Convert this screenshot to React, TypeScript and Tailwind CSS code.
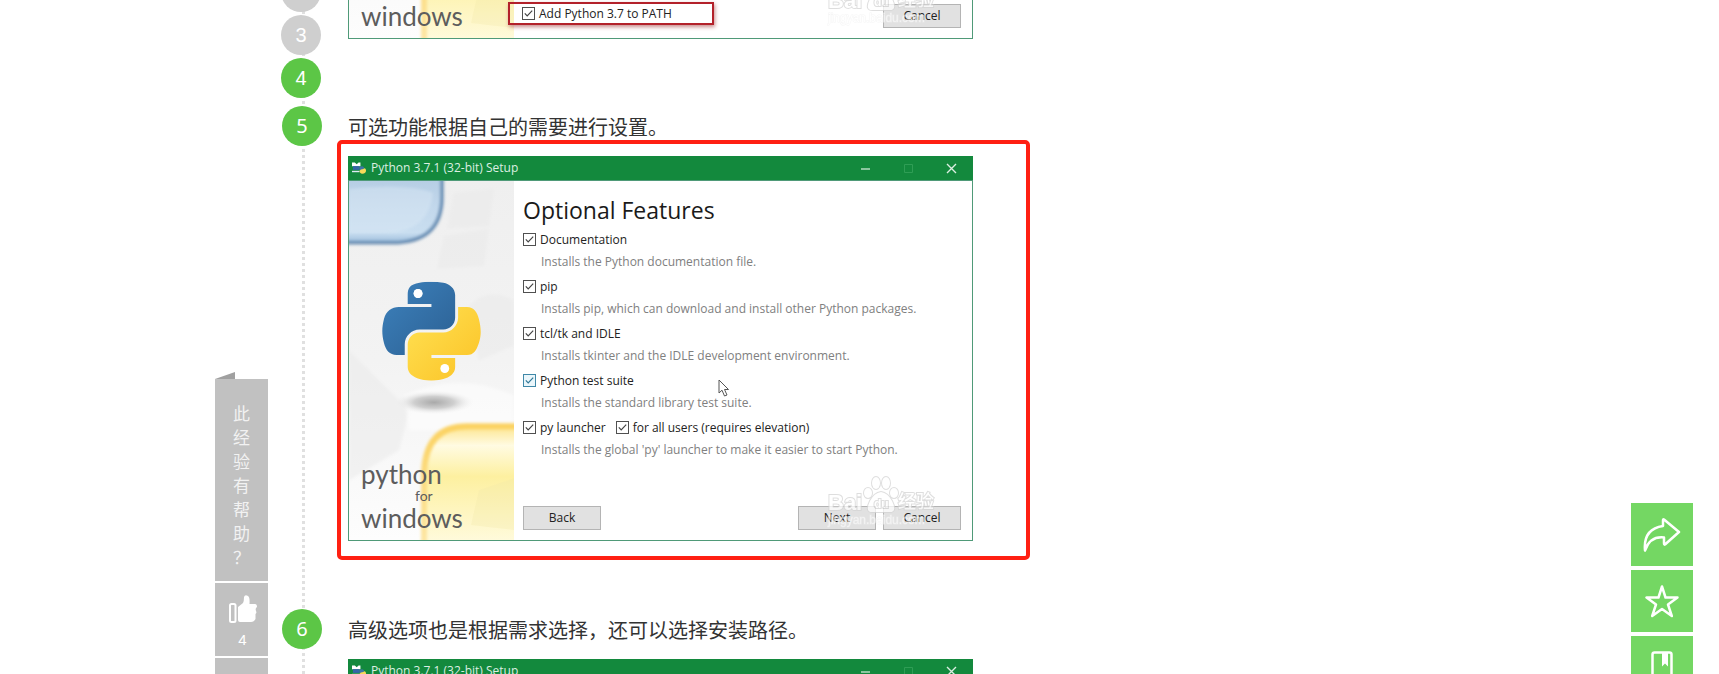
import type { ReactNode } from "react";

function Check({ label, hot }: { label: string; hot?: boolean }) {
  return (
    <label className="flex items-center gap-1 text-[12px] leading-[13px] text-[#222]">
      <span className="grid h-[13px] w-[13px]">
        <input
          type="checkbox"
          defaultChecked
          className={
            hot
              ? "peer col-start-1 row-start-1 h-[13px] w-[13px] appearance-none border border-[#3f88a8] bg-[#eaf6fb]"
              : "peer col-start-1 row-start-1 h-[13px] w-[13px] appearance-none border border-[#505050] bg-white"
          }
        />
        <svg
          viewBox="0 0 13 13"
          className={
            hot
              ? "pointer-events-none invisible col-start-1 row-start-1 h-[13px] w-[13px] text-[#2f7796] peer-checked:visible"
              : "pointer-events-none invisible col-start-1 row-start-1 h-[13px] w-[13px] text-[#444] peer-checked:visible"
          }
          fill="none"
          stroke="currentColor"
          strokeWidth="1.2"
        >
          <path d="M2.8 6.3 5.2 8.8 10.2 3.6" />
        </svg>
      </span>
      {label}
    </label>
  );
}

function PythonMark() {
  return (
    <>
      <path
        fill="url(#pyBlue)"
        d="M63.391 1.988c-4.222.02-8.252.379-11.8 1.007-10.45 1.846-12.346 5.71-12.346 12.837v9.411h24.693v3.137H29.977c-7.176 0-13.46 4.313-15.426 12.521-2.268 9.405-2.368 15.275 0 25.096 1.755 7.311 5.947 12.519 13.124 12.519h8.491V67.234c0-8.151 7.051-15.34 15.426-15.34h24.665c6.866 0 12.346-5.654 12.346-12.548V15.833c0-6.693-5.646-11.72-12.346-12.837-4.244-.706-8.645-1.027-12.866-1.008zM50.037 9.557c2.55 0 4.634 2.117 4.634 4.721 0 2.593-2.083 4.69-4.634 4.69-2.56 0-4.633-2.097-4.633-4.69-.001-2.604 2.073-4.721 4.633-4.721z"
      />
      <path
        fill="url(#pyYellow)"
        d="M91.682 28.38v10.966c0 8.5-7.208 15.655-15.426 15.655H51.591c-6.756 0-12.346 5.783-12.346 12.549v23.515c0 6.691 5.818 10.628 12.346 12.547 7.816 2.297 15.312 2.713 24.665 0 6.216-1.801 12.346-5.423 12.346-12.547v-9.412H63.938v-3.138h37.012c7.176 0 9.852-5.005 12.348-12.519 2.578-7.735 2.467-15.174 0-25.096-1.774-7.145-5.161-12.521-12.348-12.521h-9.268z"
      />
      <ellipse cx="77.8" cy="92.6" rx="4.6" ry="4.7" fill="#fff" />
      <ellipse cx="50" cy="14.3" rx="4.6" ry="4.7" fill="#fff" />
    </>
  );
}

function Artwork() {
  return (
    <svg viewBox="0 0 165 360" className="absolute inset-0 h-full w-full" preserveAspectRatio="none" aria-hidden="true">
      <defs>
        <linearGradient id="paper" x1="0" y1="0" x2="0" y2="1">
          <stop offset="0" stopColor="#efefef" />
          <stop offset="0.5" stopColor="#f3f3f3" />
          <stop offset="1" stopColor="#fdfdfd" />
        </linearGradient>
        <linearGradient id="blueTab" x1="0" y1="0" x2="0" y2="1">
          <stop offset="0" stopColor="#b4cce3" />
          <stop offset="0.5" stopColor="#c3d8ec" />
          <stop offset="0.85" stopColor="#c9def0" />
          <stop offset="1" stopColor="#9dbddc" />
        </linearGradient>
        <linearGradient id="yellowTab" x1="0" y1="0" x2="0" y2="1">
          <stop offset="0" stopColor="#fde58f" />
          <stop offset="0.16" stopColor="#fffbe2" />
          <stop offset="0.42" stopColor="#fdf0a0" />
          <stop offset="1" stopColor="#fffbe0" />
        </linearGradient>
        <linearGradient id="yellowEdge" x1="0" y1="0" x2="0" y2="1">
          <stop offset="0" stopColor="#fbd262" />
          <stop offset="1" stopColor="#fde7a6" />
        </linearGradient>
        <linearGradient id="pyBlue" x1="0" y1="0" x2="1" y2="1">
          <stop offset="0" stopColor="#3d82bd" />
          <stop offset="1" stopColor="#2b5f92" />
        </linearGradient>
        <linearGradient id="pyYellow" x1="0" y1="0" x2="1" y2="1">
          <stop offset="0" stopColor="#ffe254" />
          <stop offset="1" stopColor="#fbc225" />
        </linearGradient>
        <radialGradient id="shade">
          <stop offset="0" stopColor="#a9a9a9" />
          <stop offset="0.5" stopColor="#cfcfcf" />
          <stop offset="1" stopColor="#f3f3f3" stopOpacity="0" />
        </radialGradient>
        <filter id="soft" x="-20%" y="-20%" width="140%" height="140%">
          <feGaussianBlur stdDeviation="1.5" />
        </filter>
      </defs>
      <rect width="165" height="360" fill="url(#paper)" />
      <g filter="url(#soft)">
        <path d="M105 12 145 8 140 45 98 48zM95 55 140 48 135 85 88 88zM120 125Q140 105 165 120V165L130 180zM0 170 60 230 50 270 0 300z" fill="#eaeaea" opacity="0.5" />
        <path d="M55 215Q110 190 165 215V250H60z" fill="#fff" opacity="0.5" />
      </g>
      <path d="M-6-6H94V16Q94 62 44 62H-6z" fill="url(#blueTab)" />
      <path d="M93-6V16Q93 62 43 62H-6" fill="none" stroke="#6f92b5" strokeWidth="3.5" filter="url(#soft)" />
      <path d="M0 8Q60 2 84 12Q80 50 40 52H0z" fill="#dceaf6" opacity="0.45" filter="url(#soft)" />
      <path d="M75 366V292Q77 246 118 246H172V366z" fill="url(#yellowTab)" />
      <path d="M75 366V292Q77 246 118 246H172" fill="none" stroke="url(#yellowEdge)" strokeWidth="6" filter="url(#soft)" />
      <path d="M130 310 165 298V350L122 345z" fill="#f2e8a8" opacity="0.3" />
      <ellipse cx="85" cy="222" rx="40" ry="12" fill="url(#shade)" />
      <svg x="33" y="101" width="99" height="99" viewBox="13 2 102 103">
        <PythonMark />
      </svg>
    </svg>
  );
}

function Watermark() {
  return (
    <div className="pointer-events-none absolute right-[35px] bottom-[11px] flex opacity-75" aria-hidden="true">
      <svg viewBox="0 0 115 60" className="h-[60px] w-[115px]">
        <g fill="#fff" stroke="#d4d4d4" strokeWidth="2" paintOrder="stroke">
          <text x="5" y="40" fontFamily="Liberation Sans" fontWeight="700" fontSize="22">Bai</text>
          <ellipse cx="53" cy="13" rx="4" ry="6" />
          <ellipse cx="63" cy="13" rx="4" ry="6" />
          <ellipse cx="45" cy="23" rx="4" ry="5" />
          <ellipse cx="71" cy="23" rx="4" ry="5" />
          <path d="M58 22Q65 23 69 31Q75 43 65 42H51Q41 43 47 31Q51 23 58 22z" />
          <text x="51" y="38" fontFamily="Liberation Sans" fontWeight="700" fontSize="12">du</text>
          <text x="75" y="38" fontFamily="Noto Sans CJK SC" fontWeight="500" fontSize="18">经验</text>
        </g>
        <text x="5" y="54" fontFamily="Liberation Sans" fontSize="12" fill="#fff" opacity="0.8" stroke="#eee" strokeWidth="1" paintOrder="stroke">jingyan.baidu.com</text>
      </svg>
    </div>
  );
}

function WinButton({ children }: { children: string }) {
  return (
    <button type="button" className="h-[24px] w-[78px] border border-[#b4b4b4] bg-[#e1e1e1] text-[12px] leading-[22px] text-[#222]">
      {children}
    </button>
  );
}

function Installer({ children, footer }: { children?: ReactNode; footer?: ReactNode }) {
  return (
    <div className="relative flex h-[385px] w-[625px] shrink-0 flex-col bg-white font-['Open_Sans','Noto_Sans',sans-serif]">
      <div className="flex h-[24px] shrink-0 items-center bg-[#13893d] pr-4 pl-1 text-[#dcefe2]">
        <svg viewBox="0 0 16 14" className="h-[14px] w-[15px]" aria-hidden="true">
          <path d="M0 1h3l2 2 2-2h2v4H0z" fill="#fff" />
          <path d="M1 5h7v4H1z" fill="#3566a8" />
          <path d="M0 10h8v1.500H0z" fill="#dfe9f5" />
          <path d="M8 6q4-2 5 1-1 3-5 2z" fill="#3d74a8" />
          <path d="M8 10q1-2 4-2 2-2 3 1 0 4-4 4-3 0-3-3z" fill="#f6d95a" />
        </svg>
        <span className="ml-1 text-[12px] leading-[24px]">Python 3.7.1 (32-bit) Setup</span>
        <span className="ml-auto flex items-center gap-8">
          <button type="button" aria-label="Minimize">
            <svg viewBox="0 0 11 11" className="h-[11px] w-[11px]" stroke="currentColor" strokeWidth="1.2"><path d="M1 6h9" /></svg>
          </button>
          <button type="button" aria-label="Maximize">
            <svg viewBox="0 0 11 11" className="h-[11px] w-[11px]" fill="none" stroke="#2f9d55"><path d="M1.500 1.500h8v8h-8z" /></svg>
          </button>
          <button type="button" aria-label="Close">
            <svg viewBox="0 0 11 11" className="h-[11px] w-[11px]" stroke="currentColor" strokeWidth="1.400"><path d="m1 1 9 9M10 1l-9 9" /></svg>
          </button>
        </span>
      </div>
      <div className="flex min-h-0 flex-1 border border-[#4f9a78]">
        <div className="relative flex w-[165px] shrink-0 flex-col justify-end overflow-hidden">
          <Artwork />
          <div className="relative flex flex-col pb-[8px] pl-3 font-[Lato,sans-serif] text-[26px] leading-[28px] text-[#5d5d5d]">
            <span>python</span>
            <span className="pl-[54px] text-[14px] leading-[16px]">for</span>
            <span>windows</span>
          </div>
        </div>
        <div className="relative flex flex-1 flex-col pr-[11px] pl-[9px]">
          {children}
          <div className="mt-auto flex pb-[10px]">{footer}</div>
        </div>
      </div>
      <Watermark />
    </div>
  );
}

function Badge({ n, done }: { n: number; done?: boolean }) {
  return (
    <span
      className={
        done
          ? "flex h-10 w-10 shrink-0 items-center justify-center rounded-full bg-[#5cc646] text-[20px] text-white"
          : "flex h-10 w-10 shrink-0 items-center justify-center rounded-full bg-[#cfcfcf] text-[20px] text-white"
      }
    >
      {n}
    </span>
  );
}

const features = [
  ["Documentation", "Installs the Python documentation file."],
  ["pip", "Installs pip, which can download and install other Python packages."],
  ["tcl/tk and IDLE", "Installs tkinter and the IDLE development environment."],
  ["Python test suite", "Installs the standard library test suite."],
  ["py launcher", "Installs the global 'py' launcher to make it easier to start Python."],
];

export default function App() {
  return (
    <div className="flex h-screen items-start overflow-hidden bg-white font-['Noto_Sans','Noto_Sans_CJK_SC',sans-serif] text-[#333]">
      <aside className="mt-[372px] ml-[215px] flex w-[53px] shrink-0 flex-col text-[#f2f2f2]">
        <svg viewBox="0 0 20 7" className="h-[7px] w-[20px]" aria-hidden="true"><path d="M0 7 20 0V7z" fill="#a0a0a0" /></svg>
        <div className="flex flex-col gap-[2px]">
          <p className="flex h-[202px] flex-col items-center bg-[#c1c1c1] pt-[23px] text-[17px] leading-6">
            {"此经验有帮助？".split("").map((c) => (
              <span key={c}>{c}</span>
            ))}
          </p>
          <button type="button" aria-label="有帮助 4" className="flex h-[73px] flex-col items-center bg-[#c1c1c1] pt-3 pl-[2px] font-['Liberation_Sans',sans-serif] text-[15px] text-white">
            <svg viewBox="0 0 28 28" className="h-[28px] w-[28px]" aria-hidden="true">
              <rect x="1" y="9" width="5.500" height="18" rx="1.500" fill="none" stroke="#fff" strokeWidth="2" />
              <path d="M9 12 14 8Q15 6 15 2Q16-1 19 1Q21 2 20.500 9H26Q28 9 28 12Q26 13 27 16Q28 18 26.500 19V24Q25 27 22 27H11Q9 27 9 25z" fill="#fff" />
            </svg>
            <span className="mt-[5px] leading-[24px]">4</span>
          </button>
          <div className="h-[73px] bg-[#c1c1c1]" />
        </div>
      </aside>

      <ol className="ml-[13px] flex min-w-0 flex-col bg-[linear-gradient(#e0e0e0_3px,transparent_3px)] bg-[length:3px_6px] bg-[position:21px_5px] bg-repeat-y">
        <li className="flex h-[98px] gap-[26px]">
          <div className="flex w-[41px] shrink-0 flex-col items-start justify-end gap-[3px] overflow-hidden font-['Liberation_Sans',sans-serif]">
            <Badge n={2} />
            <Badge n={3} />
            <Badge n={4} done />
          </div>
          <div className="flex h-[39px] flex-col justify-end overflow-hidden">
            <Installer
              footer={
                <>
                  <div className="-ml-[15px] flex h-[23px] w-[206px] items-center border-2 border-[#b3212a] pl-3 shadow-[1px_2px_4px_#c98b8b]">
                    <Check label="Add Python 3.7 to PATH" />
                  </div>
                  <div className="ml-auto"><WinButton>Cancel</WinButton></div>
                </>
              }
            />
          </div>
        </li>

        <li className="flex h-[503px] gap-[26px] pt-2">
          <div className="flex w-[41px] shrink-0 justify-end"><Badge n={5} done /></div>
          <div className="flex flex-col items-start">
            <p className="mt-1 mb-[10px] text-[20px] leading-9">可选功能根据自己的需要进行设置。</p>
            <div className="relative">
              <Installer
                footer={
                  <>
                    <WinButton>Back</WinButton>
                    <div className="ml-auto flex gap-[7px]">
                      <WinButton>Next</WinButton>
                      <WinButton>Cancel</WinButton>
                    </div>
                  </>
                }
              >
                <h2 className="mt-[13px] mb-[7px] text-[23px] leading-8 text-[#1a1a1a]">Optional Features</h2>
                {features.map(([name, about]) => (
                  <div key={name} className="flex h-[47px] shrink-0 flex-col">
                    <div className="flex gap-[10px]">
                      <Check label={name} hot={name === "Python test suite"} />
                      {name === "py launcher" && <Check label="for all users (requires elevation)" />}
                    </div>
                    <p className="mt-[6px] pl-[18px] text-[12px] leading-[20px] whitespace-nowrap text-[#808080]">{about}</p>
                  </div>
                ))}
              </Installer>
              <svg viewBox="0 0 12 18" className="absolute top-[223px] left-[370px] h-[18px] w-[12px]" aria-hidden="true">
                <path d="M1 1V14L4 11.200 6.500 17 9 16 6.500 10.500H10.500z" fill="#fff" stroke="#555" />
              </svg>
              <div className="pointer-events-none absolute -top-4 -right-[57px] -bottom-[19px] -left-[11px] rounded-[5px] border-4 border-[#ff2012]" />
            </div>
          </div>
        </li>

        <li className="flex gap-[26px] pt-2">
          <div className="flex w-[41px] shrink-0 justify-end"><Badge n={6} done /></div>
          <div className="flex flex-col items-start">
            <p className="mt-1 mb-[10px] text-[20px] leading-9">高级选项也是根据需求选择，还可以选择安装路径。</p>
            <Installer />
          </div>
        </li>
      </ol>

      <nav className="mt-[503px] mr-[26px] ml-auto flex w-[62px] shrink-0 flex-col gap-1">
        <button type="button" aria-label="分享" className="flex h-[63px] items-center justify-center bg-[#74d763]">
          <svg viewBox="0 0 38 36" className="h-[36px] w-[38px]" fill="none" stroke="#fff" strokeWidth="2.500" strokeLinejoin="round">
            <path d="M21 2.500 36 15 22 27.500Q21 28 21 26V20.500Q7 19 2 33.500Q0 12 20 9V3.500Q20 2 21 2.500z" />
          </svg>
        </button>
        <button type="button" aria-label="收藏" className="flex h-[62px] items-center justify-center bg-[#74d763]">
          <svg viewBox="0 0 34 34" className="h-[34px] w-[34px]" fill="none" stroke="#fff" strokeWidth="2.500" strokeLinejoin="round">
            <path d="M17 2.500 20.500 13.500H32.500L23 20.500 26.800 32 17 25 7.200 32 11 20.500 1.500 13.500H13.500z" />
          </svg>
        </button>
        <button type="button" aria-label="书签" className="flex h-[62px] items-start justify-center bg-[#74d763] pt-[15px]">
          <svg viewBox="0 0 22 32" className="h-[32px] w-[22px]" fill="none" stroke="#fff" strokeWidth="2.500">
            <rect x="1.500" y="1.500" width="19" height="29" rx="2" />
            <path d="M11 1H17V15.500L14 12.500 11 15.500z" fill="#fff" stroke="none" />
          </svg>
        </button>
      </nav>
    </div>
  );
}
